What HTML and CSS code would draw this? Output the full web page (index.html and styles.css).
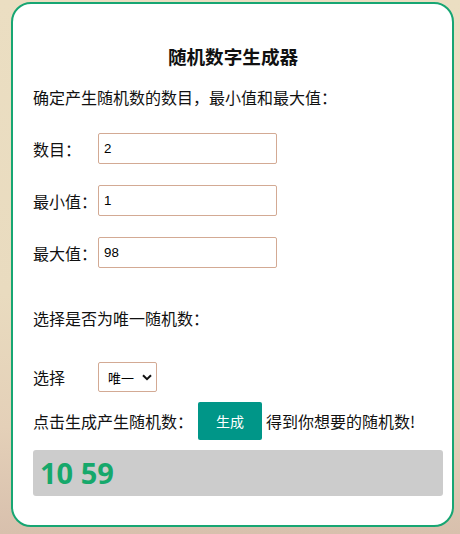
FILE: index.html
```html
<!DOCTYPE html>
<html lang="zh-CN">
<head>
<meta charset="utf-8">
<title>随机数字生成器</title>
<link rel="stylesheet" href="styles.css">
</head>
<body>
<div class="card">
  <h3 class="title">随机数字生成器</h3>
  <p class="line intro">确定产生随机数的数目，最小值和最大值：</p>
  <div class="row first">
    <span class="label">数目：</span>
    <input class="field" type="text" value="2">
  </div>
  <div class="row">
    <span class="label">最小值：</span>
    <input class="field" type="text" value="1">
  </div>
  <div class="row">
    <span class="label">最大值：</span>
    <input class="field" type="text" value="98">
  </div>
  <p class="line choose">选择是否为唯一随机数：</p>
  <div class="row select-row">
    <span class="label">选择</span>
    <div class="select-wrap">
      <select class="select">
        <option>唯一</option>
        <option>不唯一</option>
      </select>
      <svg class="chev" width="10" height="7" viewBox="0 0 10 7"><path d="M1 1.2 L5 5.2 L9 1.2" fill="none" stroke="#111" stroke-width="2"/></svg>
    </div>
  </div>
  <div class="gen-row">
    <span>点击生成产生随机数：</span>
    <button class="btn">生成</button>
    <span>得到你想要的随机数!</span>
  </div>
  <div class="output">10 59</div>
</div>
</body>
</html>
```

FILE: styles.css
```css
html, body {
  margin: 0;
  padding: 0;
}
body {
  width: 460px;
  height: 534px;
  overflow: hidden;
  background: linear-gradient(to bottom, #ebdec2 0%, #e9dbbf 55%, #e4d0b8 80%, #d8c0ad 100%);
  font-family: "Noto Sans CJK SC", "Noto Sans", sans-serif;
  color: #111;
  padding-top: 2px;
  box-sizing: border-box;
}
.card {
  box-sizing: border-box;
  margin-left: 11px;
  width: 443px;
  height: 525px;
  background: #fff;
  border: 2px solid #17a673;
  border-radius: 20px;
  padding: 40px 9px 0 20px;
}
.title {
  margin: 0;
  font-size: 18.6px;
  line-height: 24px;
  font-weight: bold;
  text-align: center;
  padding-right: 10px;
}
.line {
  margin: 0;
  font-size: 16px;
  line-height: 24px;
}
.intro {
  margin-top: 17px;
}
.row {
  display: flex;
  align-items: center;
  height: 31px;
  margin-top: 21px;
  font-size: 16px;
}
.row.first {
  margin-top: 24px;
}
.label {
  width: 65px;
  flex: none;
  line-height: 24px;
}
.field {
  box-sizing: border-box;
  width: 179px;
  height: 31px;
  border: 1px solid #d3aa94;
  border-radius: 2px;
  padding: 0 5px;
  font-family: "Liberation Sans", Arial, sans-serif;
  font-size: 13.3px;
  color: #000;
  background: #fff;
  outline: none;
}
.choose {
  margin-top: 38px;
}
.select-row {
  margin-top: 32px;
  height: 30px;
}
.select-wrap {
  position: relative;
  width: 59px;
  height: 30px;
}
.select {
  appearance: none;
  -webkit-appearance: none;
  box-sizing: border-box;
  width: 59px;
  height: 30px;
  border: 1px solid #d3aa94;
  border-radius: 2px;
  background: #fff;
  padding: 0 0 0 9px;
  font-family: "Noto Sans CJK SC", sans-serif;
  font-size: 13px;
  color: #000;
  outline: none;
}
.chev {
  position: absolute;
  right: 5px;
  top: 12px;
  pointer-events: none;
}
.gen-row {
  display: flex;
  align-items: center;
  margin-top: 10px;
  height: 38px;
  font-size: 16px;
  line-height: 24px;
}
.btn {
  width: 64px;
  height: 38px;
  margin: 0 4px 0 5px;
  border: none;
  border-radius: 2px;
  background: #009688;
  color: #fff;
  font-family: "Noto Sans CJK SC", sans-serif;
  font-size: 14px;
  padding: 0;
}
.output {
  box-sizing: border-box;
  margin-top: 10px;
  width: 410px;
  height: 46px;
  background: #cccccc;
  border-radius: 3px;
  padding-left: 7px;
  font-family: "Open Sans", "Noto Sans", sans-serif;
  font-weight: bold;
  font-size: 29px;
  line-height: 46px;
  color: #16a86b;
}
```
